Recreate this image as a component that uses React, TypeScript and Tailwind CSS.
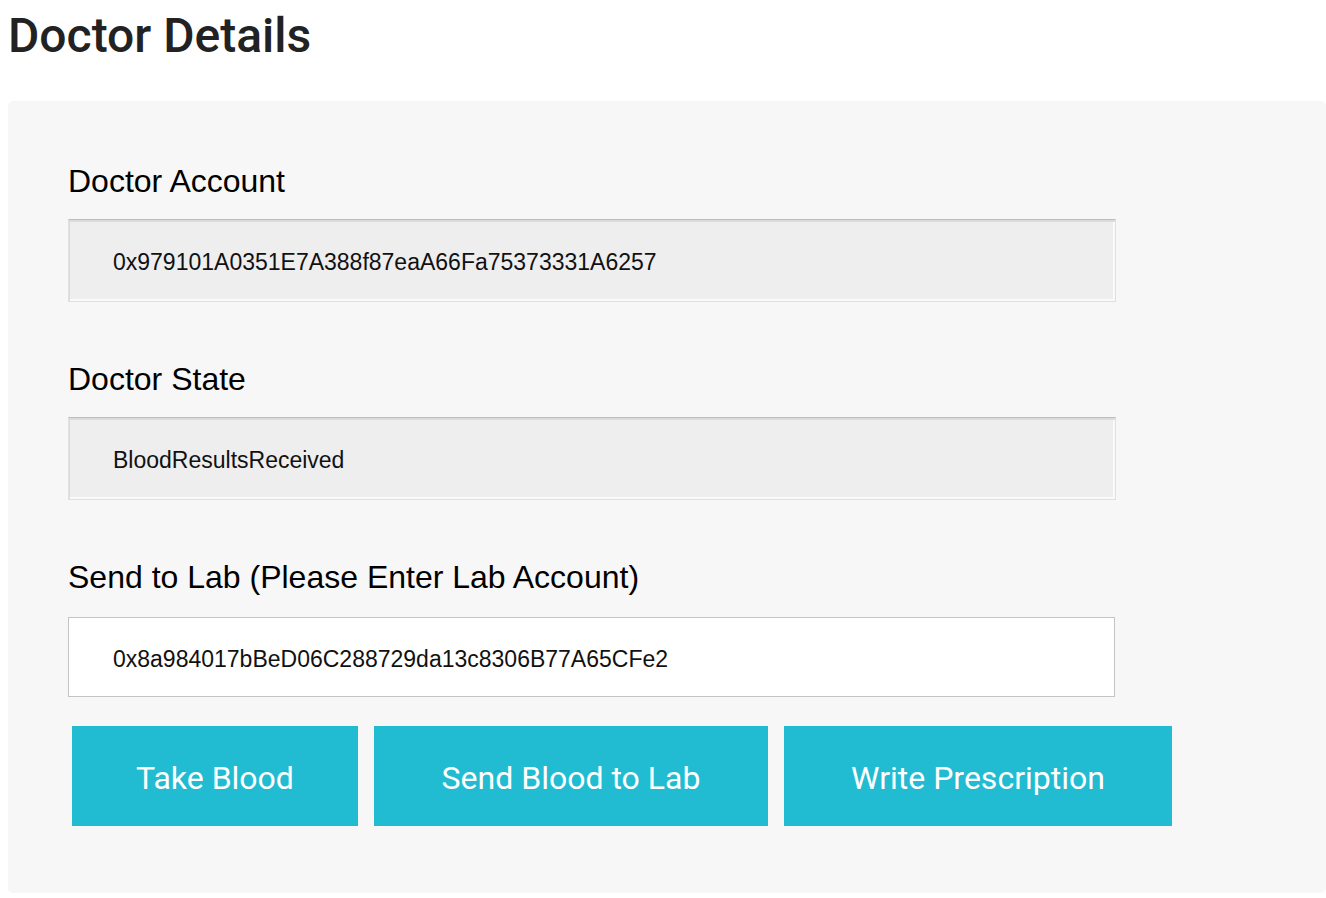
export default function App() {
  const readonlyInput =
    "block w-[1048px] h-[83px] bg-[#eeeeee] border border-[#e0e0e0] border-t-[#bdbdbd] shadow-[inset_1px_2px_0_#dcdcdc,inset_-2px_-2px_0_#fafafa] pl-[44px] pt-[4px] text-[23px] text-[#111] outline-none";

  return (
    <div className="min-h-screen bg-white font-['Liberation_Sans',Arial,sans-serif] text-black">
      <h1 className="pl-2 pt-[6px] text-[48px] leading-[60px] font-medium text-[#222] font-['Roboto',sans-serif]">
        Doctor Details
      </h1>

      <div className="ml-2 mt-[35px] w-[1318px] rounded-[5px] bg-[#f7f7f7] pl-[60px] pt-[61px] pb-[67px]">
        {/* account */}
        <label className="block text-[32px] leading-[38px]">Doctor Account</label>
        <input
          readOnly
          value="0x979101A0351E7A388f87eaA66Fa75373331A6257"
          className={`mt-[19px] ${readonlyInput}`}
        />

        {/* state */}
        <label className="mt-[58px] block text-[32px] leading-[38px]">Doctor State</label>
        <input readOnly value="BloodResultsReceived" className={`mt-[19px] ${readonlyInput}`} />

        {/* lab */}
        <label className="mt-[58px] block text-[32px] leading-[38px]">
          Send to Lab (Please Enter Lab Account)
        </label>
        <input
          defaultValue="0x8a984017bBeD06C288729da13c8306B77A65CFe2"
          className="mt-[21px] block h-[80px] w-[1047px] border border-[#c4c4c4] bg-white pl-[44px] pt-[4px] text-[23px] text-[#111] outline-none"
        />

        <div className="mt-[29px] ml-1 flex gap-4 font-['Roboto',sans-serif]">
          <button className="h-[100px] w-[286px] bg-[#21bcd2] pt-[3px] text-[32px] text-white">Take Blood</button>
          <button className="h-[100px] w-[394px] bg-[#21bcd2] pt-[3px] text-[32px] text-white">Send Blood to Lab</button>
          <button className="h-[100px] w-[388px] bg-[#21bcd2] pt-[3px] text-[32px] text-white">Write Prescription</button>
        </div>
      </div>
    </div>
  );
}
